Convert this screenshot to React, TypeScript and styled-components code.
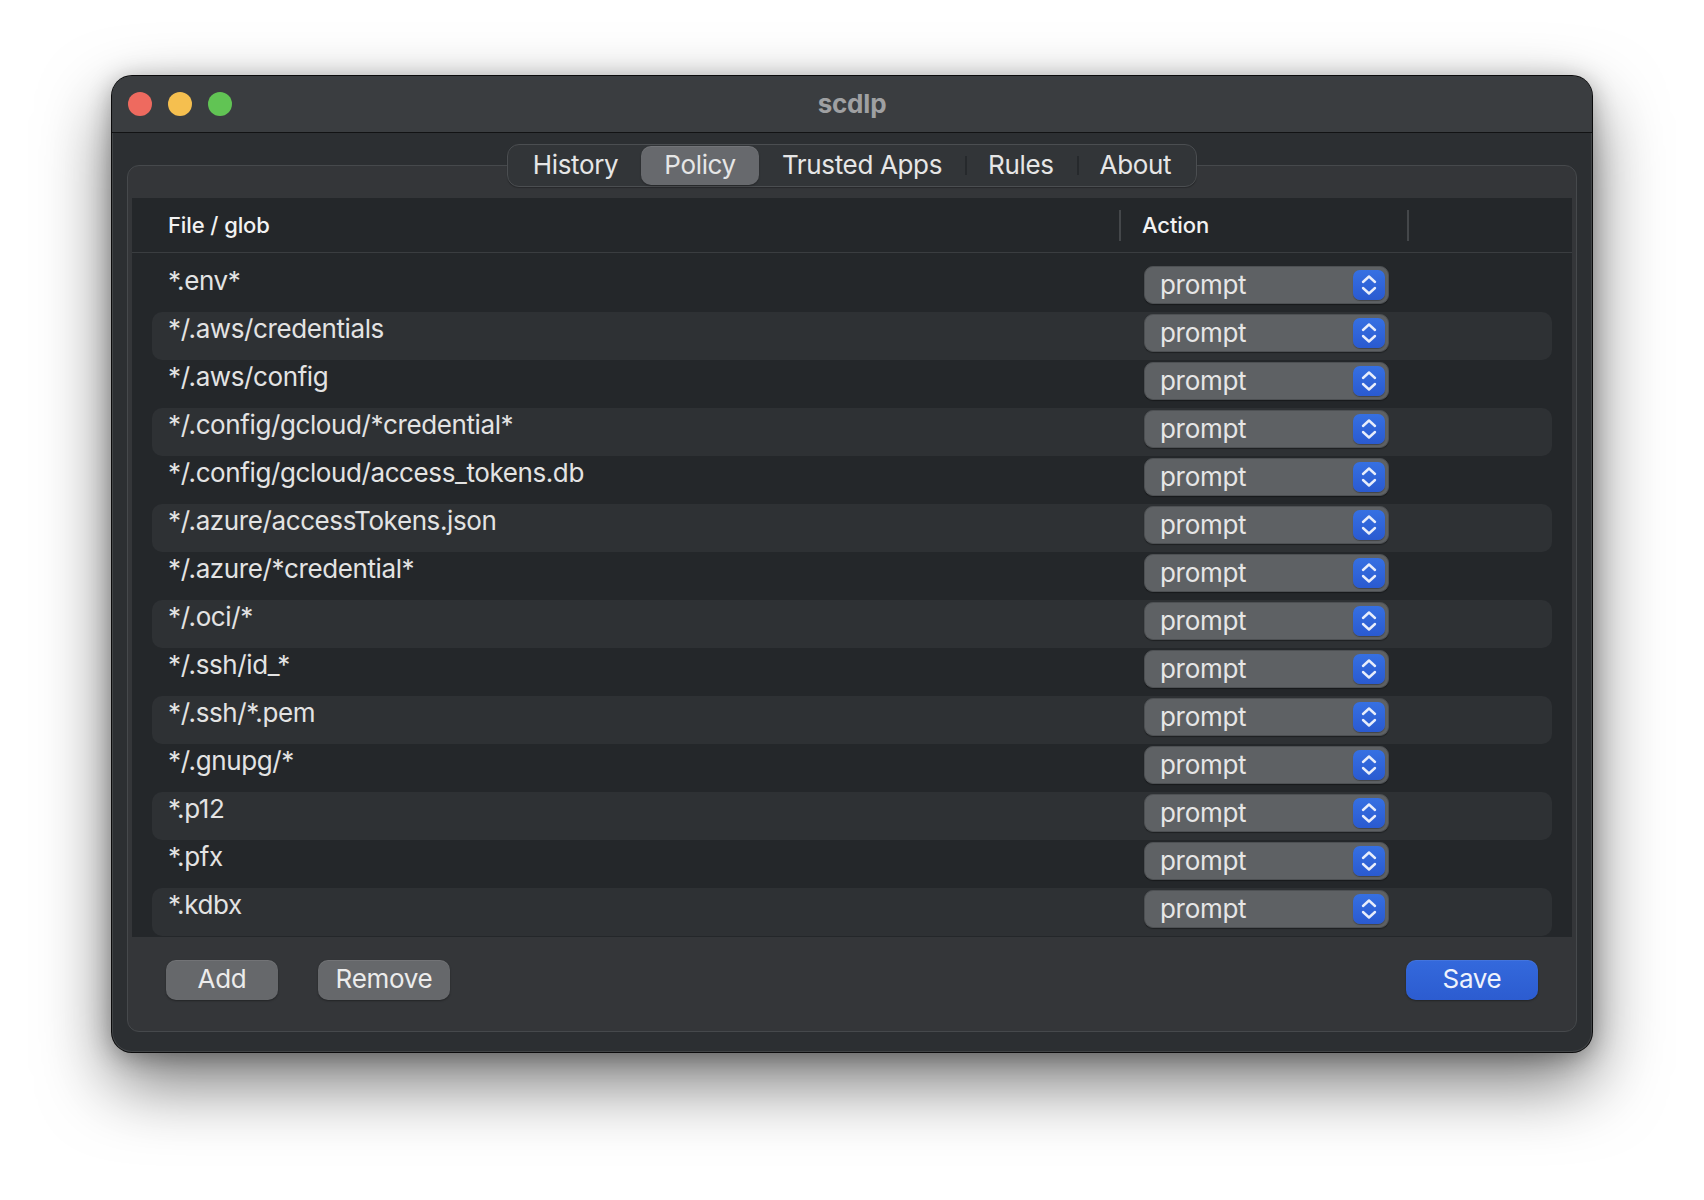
import React from "react";
import styled, { createGlobalStyle } from "styled-components";

const GlobalStyle = createGlobalStyle`
  html, body { margin: 0; padding: 0; background: #ffffff; }
  body { font-family: Inter, "Noto Sans", "Liberation Sans", sans-serif; -webkit-font-smoothing: antialiased; }
  * { box-sizing: border-box; }
`;

const Page = styled.div`
  width: 1704px;
  height: 1200px;
  display: flex;
  justify-content: center;
  padding-top: 76px;
  background: #ffffff;
`;

const Window = styled.div`
  width: 1480px;
  height: 976px;
  border-radius: 20px;
  background: #2c2f32;
  box-shadow: 0 0 0 1px #0b0b0c, inset 0 0 0 1px rgba(255, 255, 255, 0.1),
    0 30px 70px rgba(0, 0, 0, 0.55), 0 4px 24px rgba(0, 0, 0, 0.3);
  overflow: hidden;
  display: flex;
  flex-direction: column;
`;

const TitleBar = styled.div`
  height: 57px;
  flex: none;
  background: #3a3d40;
  border-bottom: 1px solid #121314;
  display: grid;
  grid-template-columns: 1fr auto 1fr;
  align-items: center;
  padding: 0 16px;
`;

const Lights = styled.div`
  display: flex;
  gap: 16px;
`;

const Light = styled.span<{ $c: string }>`
  width: 24px;
  height: 24px;
  border-radius: 50%;
  background: ${(p) => p.$c};
`;

const Title = styled.div`
  font-size: 26px;
  font-weight: 700;
  color: #9fa0a2;
  letter-spacing: -0.2px;
  padding-bottom: 2px;
`;

const Body = styled.div`
  flex: 1;
  display: flex;
  flex-direction: column;
  padding: 11px 15px 20px;
`;

const Tabs = styled.div`
  align-self: center;
  position: relative;
  z-index: 1;
  margin-bottom: -22px;
  height: 43px;
  display: flex;
  align-items: center;
  padding: 0 2px;
  border: 1px solid #4b4e51;
  border-radius: 12px;
  background: #323538;
  box-shadow: 0 1px 1px rgba(0, 0, 0, 0.25);
`;

const Tab = styled.div<{ $active?: boolean; $sep?: boolean }>`
  position: relative;
  height: 39px;
  display: flex;
  align-items: center;
  padding: 0 23px 2px;
  font-size: 26px;
  letter-spacing: -0.35px;
  color: #e6e6e6;
  border-radius: 10px;
  background: ${(p) => (p.$active ? "#67696d" : "transparent")};
  box-shadow: ${(p) => (p.$active ? "inset 0 1px 0 rgba(255,255,255,0.08), 0 1px 2px rgba(0,0,0,0.3)" : "none")};
  &::before {
    content: "";
    display: ${(p) => (p.$sep ? "block" : "none")};
    position: absolute;
    left: 0;
    top: 10px;
    bottom: 10px;
    width: 2px;
    background: #26292c;
  }
`;

const Panel = styled.div`
  flex: 1;
  display: flex;
  flex-direction: column;
  background: #343639;
  border: 1px solid #46494c;
  border-radius: 12px;
  padding: 32px 4px 21px;
`;

const Table = styled.div`
  background: #24272a;
  display: flex;
  flex-direction: column;
  padding-bottom: 1px;
`;

const HeaderRow = styled.div`
  height: 55px;
  display: grid;
  grid-template-columns: 951px 2px 286px 2px 1fr;
  align-items: center;
  padding-left: 36px;
  border-bottom: 1px solid #3a3d40;
`;

const HeaderCell = styled.div<{ $pad?: number }>`
  font-size: 22px;
  font-weight: 500;
  letter-spacing: -0.1px;
  color: #f2f2f2;
  padding-left: ${(p) => p.$pad ?? 0}px;
`;

const HeaderDivider = styled.div`
  width: 2px;
  height: 31px;
  background: #44474a;
`;

const List = styled.div`
  padding-top: 11px;
  display: flex;
  flex-direction: column;
`;

const Row = styled.div<{ $striped: boolean }>`
  height: 48px;
  margin: 0 20px;
  padding-left: 16px;
  border-radius: 10px;
  background: ${(p) => (p.$striped ? "#2e3134" : "transparent")};
  display: grid;
  grid-template-columns: 976px 245px;
`;

const Glob = styled.div`
  font-size: 26px;
  line-height: 32px;
  padding-top: 1px;
  letter-spacing: -0.4px;
  color: #e3e3e3;
`;

const Select = styled.div`
  margin-top: 2px;
  width: 245px;
  height: 38px;
  border-radius: 9px;
  background: #5e6164;
  border: 1px solid #4d5053;
  box-shadow: 0 1px 1px rgba(0, 0, 0, 0.35);
  display: flex;
  align-items: center;
  justify-content: space-between;
  padding: 0 3px 0 15px;
`;

const SelectText = styled.span`
  font-size: 26px;
  letter-spacing: -0.3px;
  color: #e6e6e6;
  padding-bottom: 2px;
`;

const Stepper = styled.span`
  width: 32px;
  height: 30px;
  border-radius: 7px;
  background: linear-gradient(#3670e2, #2a5ad0);
  box-shadow: 0 1px 1px rgba(0, 0, 0, 0.3);
  display: flex;
  align-items: center;
  justify-content: center;
`;

const Footer = styled.div`
  margin-top: 23px;
  padding: 0 34px;
  display: flex;
  align-items: center;
  gap: 40px;
`;

const Button = styled.div<{ $w: number; $primary?: boolean }>`
  width: ${(p) => p.$w}px;
  height: 40px;
  border-radius: 10px;
  display: flex;
  align-items: center;
  justify-content: center;
  padding-bottom: 3px;
  font-size: 26px;
  letter-spacing: -0.3px;
  color: ${(p) => (p.$primary ? "#eef2fc" : "#ececec")};
  background: ${(p) => (p.$primary ? "linear-gradient(#3469dc, #2c5cd0)" : "#66686b")};
  box-shadow: inset 0 1px 0 rgba(255, 255, 255, 0.08), 0 1px 2px rgba(0, 0, 0, 0.35);
`;

const Spacer = styled.div`
  flex: 1;
`;

const Chevrons = () => (
  <svg width="20" height="26" viewBox="0 0 20 26" fill="none">
    <path d="M4 10 L10 4.5 L16 10" stroke="#e9eefb" strokeWidth="2.4" strokeLinecap="round" strokeLinejoin="round" />
    <path d="M4 16 L10 21.5 L16 16" stroke="#e9eefb" strokeWidth="2.4" strokeLinecap="round" strokeLinejoin="round" />
  </svg>
);

const globs = [
  "*.env*",
  "*/.aws/credentials",
  "*/.aws/config",
  "*/.config/gcloud/*credential*",
  "*/.config/gcloud/access_tokens.db",
  "*/.azure/accessTokens.json",
  "*/.azure/*credential*",
  "*/.oci/*",
  "*/.ssh/id_*",
  "*/.ssh/*.pem",
  "*/.gnupg/*",
  "*.p12",
  "*.pfx",
  "*.kdbx",
];

const tabs = ["History", "Policy", "Trusted Apps", "Rules", "About"];

export default function App() {
  const active = 1;
  return (
    <Page>
      <GlobalStyle />
      <Window>
        <TitleBar>
          <Lights>
            <Light $c="#ee6a5f" />
            <Light $c="#f5bf4f" />
            <Light $c="#61c454" />
          </Lights>
          <Title>scdlp</Title>
          <div />
        </TitleBar>
        <Body>
          <Tabs>
            {tabs.map((t, i) => (
              <Tab
                key={t}
                $active={i === active}
                $sep={i > 0 && i !== active && i - 1 !== active}
              >
                {t}
              </Tab>
            ))}
          </Tabs>
          <Panel>
            <Table>
              <HeaderRow>
                <HeaderCell>File / glob</HeaderCell>
                <HeaderDivider />
                <HeaderCell $pad={21}>Action</HeaderCell>
                <HeaderDivider />
                <div />
              </HeaderRow>
              <List>
                {globs.map((g, i) => (
                  <Row key={g} $striped={i % 2 === 1}>
                    <Glob>{g}</Glob>
                    <Select>
                      <SelectText>prompt</SelectText>
                      <Stepper>
                        <Chevrons />
                      </Stepper>
                    </Select>
                  </Row>
                ))}
              </List>
            </Table>
            <Footer>
              <Button $w={112}>Add</Button>
              <Button $w={132}>Remove</Button>
              <Spacer />
              <Button $w={132} $primary>
                Save
              </Button>
            </Footer>
          </Panel>
        </Body>
      </Window>
    </Page>
  );
}
